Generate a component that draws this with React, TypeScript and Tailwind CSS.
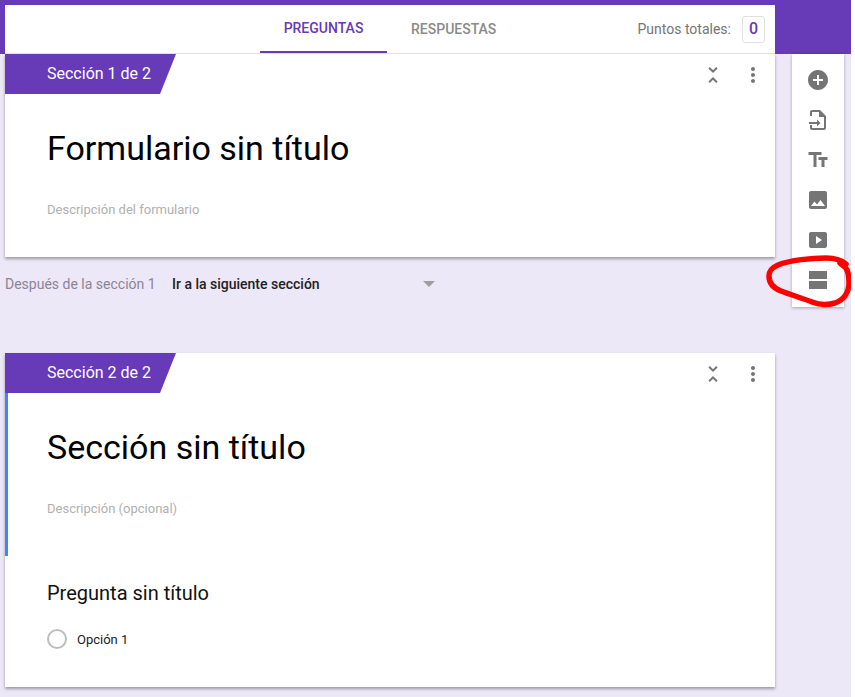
const PURPLE = "bg-[#673ab7]";

const Glyph = ({ d }: { d: string }) => (
  <svg viewBox="0 0 24 24" className="w-6 h-6 fill-[#757575]">
    <path d={d} fillRule="evenodd" />
  </svg>
);

const toolIcons = [
  "M12 2C6.48 2 2 6.48 2 12s4.48 10 10 10 10-4.48 10-10S17.52 2 12 2zm5 11h-4v4h-2v-4H7v-2h4V7h2v4h4v2z",
  "M14 2H6c-1.1 0-2 .9-2 2v4h2V4h7v5h5v11H6v-3H4v3c0 1.1.9 2 2 2h12c1.1 0 2-.9 2-2V8l-6-6zM11 11.5l3.5 3.5-3.5 3.5v-2.5H3v-2h8v-2.5z",
  "M2.5 4v3h5v12h3V7h5V4h-13zm19 5h-9v3h3v7h3v-7h3V9z",
  "M21 19V5c0-1.1-.9-2-2-2H5c-1.1 0-2 .9-2 2v14c0 1.1.9 2 2 2h14c1.1 0 2-.9 2-2zM8.5 13.5l2.5 3.01L14.5 12l4.5 6H5l3.5-4.5z",
  "M5 4h14c1.1 0 2 .9 2 2v12c0 1.1-.9 2-2 2H5c-1.1 0-2-.9-2-2V6c0-1.1.9-2 2-2zm5 4v8l6-4-6-4z",
  "M3 3h18v8H3V3zm0 10h18v8H3v-8z",
];

const SectionTag = ({ label }: { label: string }) => (
  <div className={`${PURPLE} w-[171px] h-10 pl-[42px] flex items-center text-white text-base [clip-path:polygon(0_0,100%_0,155px_100%,0_100%)]`}>
    {label}
  </div>
);

const CardActions = () => (
  <div className="flex items-center gap-4 pt-[9px] pr-[10px]">
    <Glyph d="M7.41 18.59L8.83 20 12 16.83 15.17 20l1.41-1.41L12 14l-4.59 4.59zm9.18-13.18L15.17 4 12 7.17 8.83 4 7.41 5.41 12 10l4.59-4.59z" />
    <Glyph d="M12 8c1.1 0 2-.9 2-2s-.9-2-2-2-2 .9-2 2 .9 2 2 2zm0 2c-1.1 0-2 .9-2 2s.9 2 2 2 2-.9 2-2-.9-2-2-2zm0 6c-1.1 0-2 .9-2 2s.9 2 2 2 2-.9 2-2-.9-2-2-2z" />
  </div>
);

const CardTop = ({ label }: { label: string }) => (
  <div className="flex justify-between items-start h-10">
    <SectionTag label={label} />
    <CardActions />
  </div>
);

export default function App() {
  return (
    <div className="w-[851px] h-[697px] bg-[#ede8f8] overflow-hidden relative font-['Roboto',sans-serif]">
      {/* Barra superior */}
      <header className={`${PURPLE} h-[54px] pt-[5px] pl-[5px]`}>
        <div className="w-[770px] h-[49px] bg-white border-b border-[#e0e0e0] flex relative">
          <div className="ml-[255px] w-[127px] h-full flex items-center justify-center border-b-2 border-[#673ab7] text-sm font-medium text-[#673ab7]">
            PREGUNTAS
          </div>
          <div className="ml-6 h-full flex items-center text-sm font-medium text-[#8a8a8a]">RESPUESTAS</div>
          <div className="ml-auto mr-[10px] h-full flex items-center">
            <span className="text-sm text-[#757575] mr-[11px]">Puntos totales:</span>
            <span className="w-[23px] h-[27px] flex items-center justify-center border border-[#e0e0e0] rounded-[3px] text-base font-medium text-[#673ab7]">
              0
            </span>
          </div>
        </div>
      </header>

      <div className="flex items-start pl-[5px]">
        <main className="w-[770px]">
          {/* Sección 1 */}
          <section className="bg-white h-[203px] shadow-[0_2px_3px_rgba(0,0,0,0.35)]">
            <CardTop label="Sección 1 de 2" />
            <h1 className="pl-[42px] pt-[34px] text-[34px] leading-10 text-black">Formulario sin título</h1>
            <p className="pl-[42px] pt-[34px] text-[13px] leading-4 text-[#b0b0b0]">Descripción del formulario</p>
          </section>

          <div className="flex items-center h-[53px] text-sm pt-[1px]">
            <span className="w-[167px] text-[#8a8494]">Después de la sección 1</span>
            <span className="w-[251px] font-medium text-[#212121]">Ir a la siguiente sección</span>
            <span className="w-0 h-0 border-x-[6px] border-x-transparent border-t-[6px] border-t-[#9e9e9e]" />
          </div>

          {/* Sección 2 */}
          <section className="mt-[43px] bg-white h-[334px] shadow-[0_2px_3px_rgba(0,0,0,0.35)]">
            <CardTop label="Sección 2 de 2" />
            <div className="h-[163px] border-l-[3px] border-[#4285f4] pl-[39px]">
              <h2 className="pt-[34px] text-[34px] leading-10 text-black">Sección sin título</h2>
              <p className="pt-[34px] text-[13px] leading-4 text-[#b0b0b0]">Descripción (opcional)</p>
            </div>
            <h3 className="pl-[42px] pt-[25px] text-xl leading-6 text-[#111]">Pregunta sin título</h3>
            <div className="flex items-center pl-[42px] pt-[24px]">
              <span className="w-5 h-5 rounded-full border-2 border-[#bdbdbd]" />
              <span className="ml-[10px] text-[13px] text-[#212121] relative top-[1px]">Opción 1</span>
            </div>
          </section>
        </main>

        {/* Barra de herramientas */}
        <aside className="ml-[17px] w-[52px] h-[253px] bg-white shadow-[0_1px_3px_rgba(0,0,0,0.3)] flex flex-col items-center pt-[14px] gap-4">
          {toolIcons.map((d) => (
            <Glyph key={d} d={d} />
          ))}
        </aside>
      </div>

      {/* Marca roja a mano */}
      <svg className="absolute left-[760px] top-[250px] w-[91px] h-[65px] pointer-events-none" viewBox="0 0 91 65" fill="none">
        <path
          d="M86 14C80 9 72 8 66 8C52 8 30 10 18 15C11 18 9 21 9 26C9 33 13 38 21 41C31 45 42 48 52 52C60 55 68 55 75 53C84 50 89 42 89 33C89 26 88 20 85 17L80 13"
          stroke="#f00"
          strokeWidth="5.5"
          strokeLinecap="round"
          strokeLinejoin="round"
        />
      </svg>
    </div>
  );
}
